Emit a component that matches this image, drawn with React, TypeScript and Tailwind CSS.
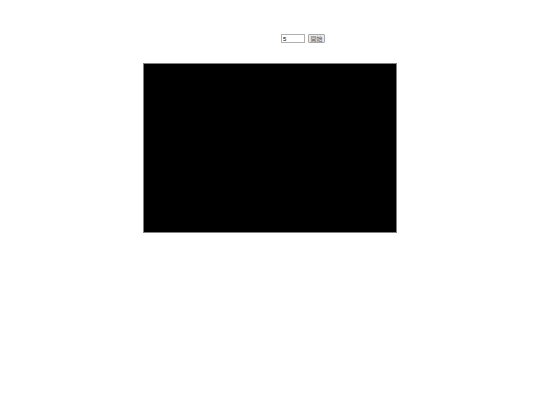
export default function App() {
  return (
    <div className="w-[540px] h-[405px] bg-white font-['Liberation_Sans','Noto_Sans_CJK_JP',sans-serif]">
      <div className="pt-[34px] pl-[281px] flex items-center gap-[3px]">
        <input
          className="w-[21px] h-[7px] box-content border border-[#b0b0b0] bg-white pl-[1px] pr-0 py-0 text-[6px] leading-none text-black outline-none"
          defaultValue="5"
        />
        <button className="w-[15px] h-[7px] box-content border border-[#a8a8a8] bg-[#ececec] px-0 text-[6px] leading-none text-[#555] rounded-[1px] flex items-center justify-center">
          開始
        </button>
      </div>
      <div className="mt-[20px] ml-[143px] w-[254px] h-[170px] bg-black border border-[#808080]" />
    </div>
  );
}
